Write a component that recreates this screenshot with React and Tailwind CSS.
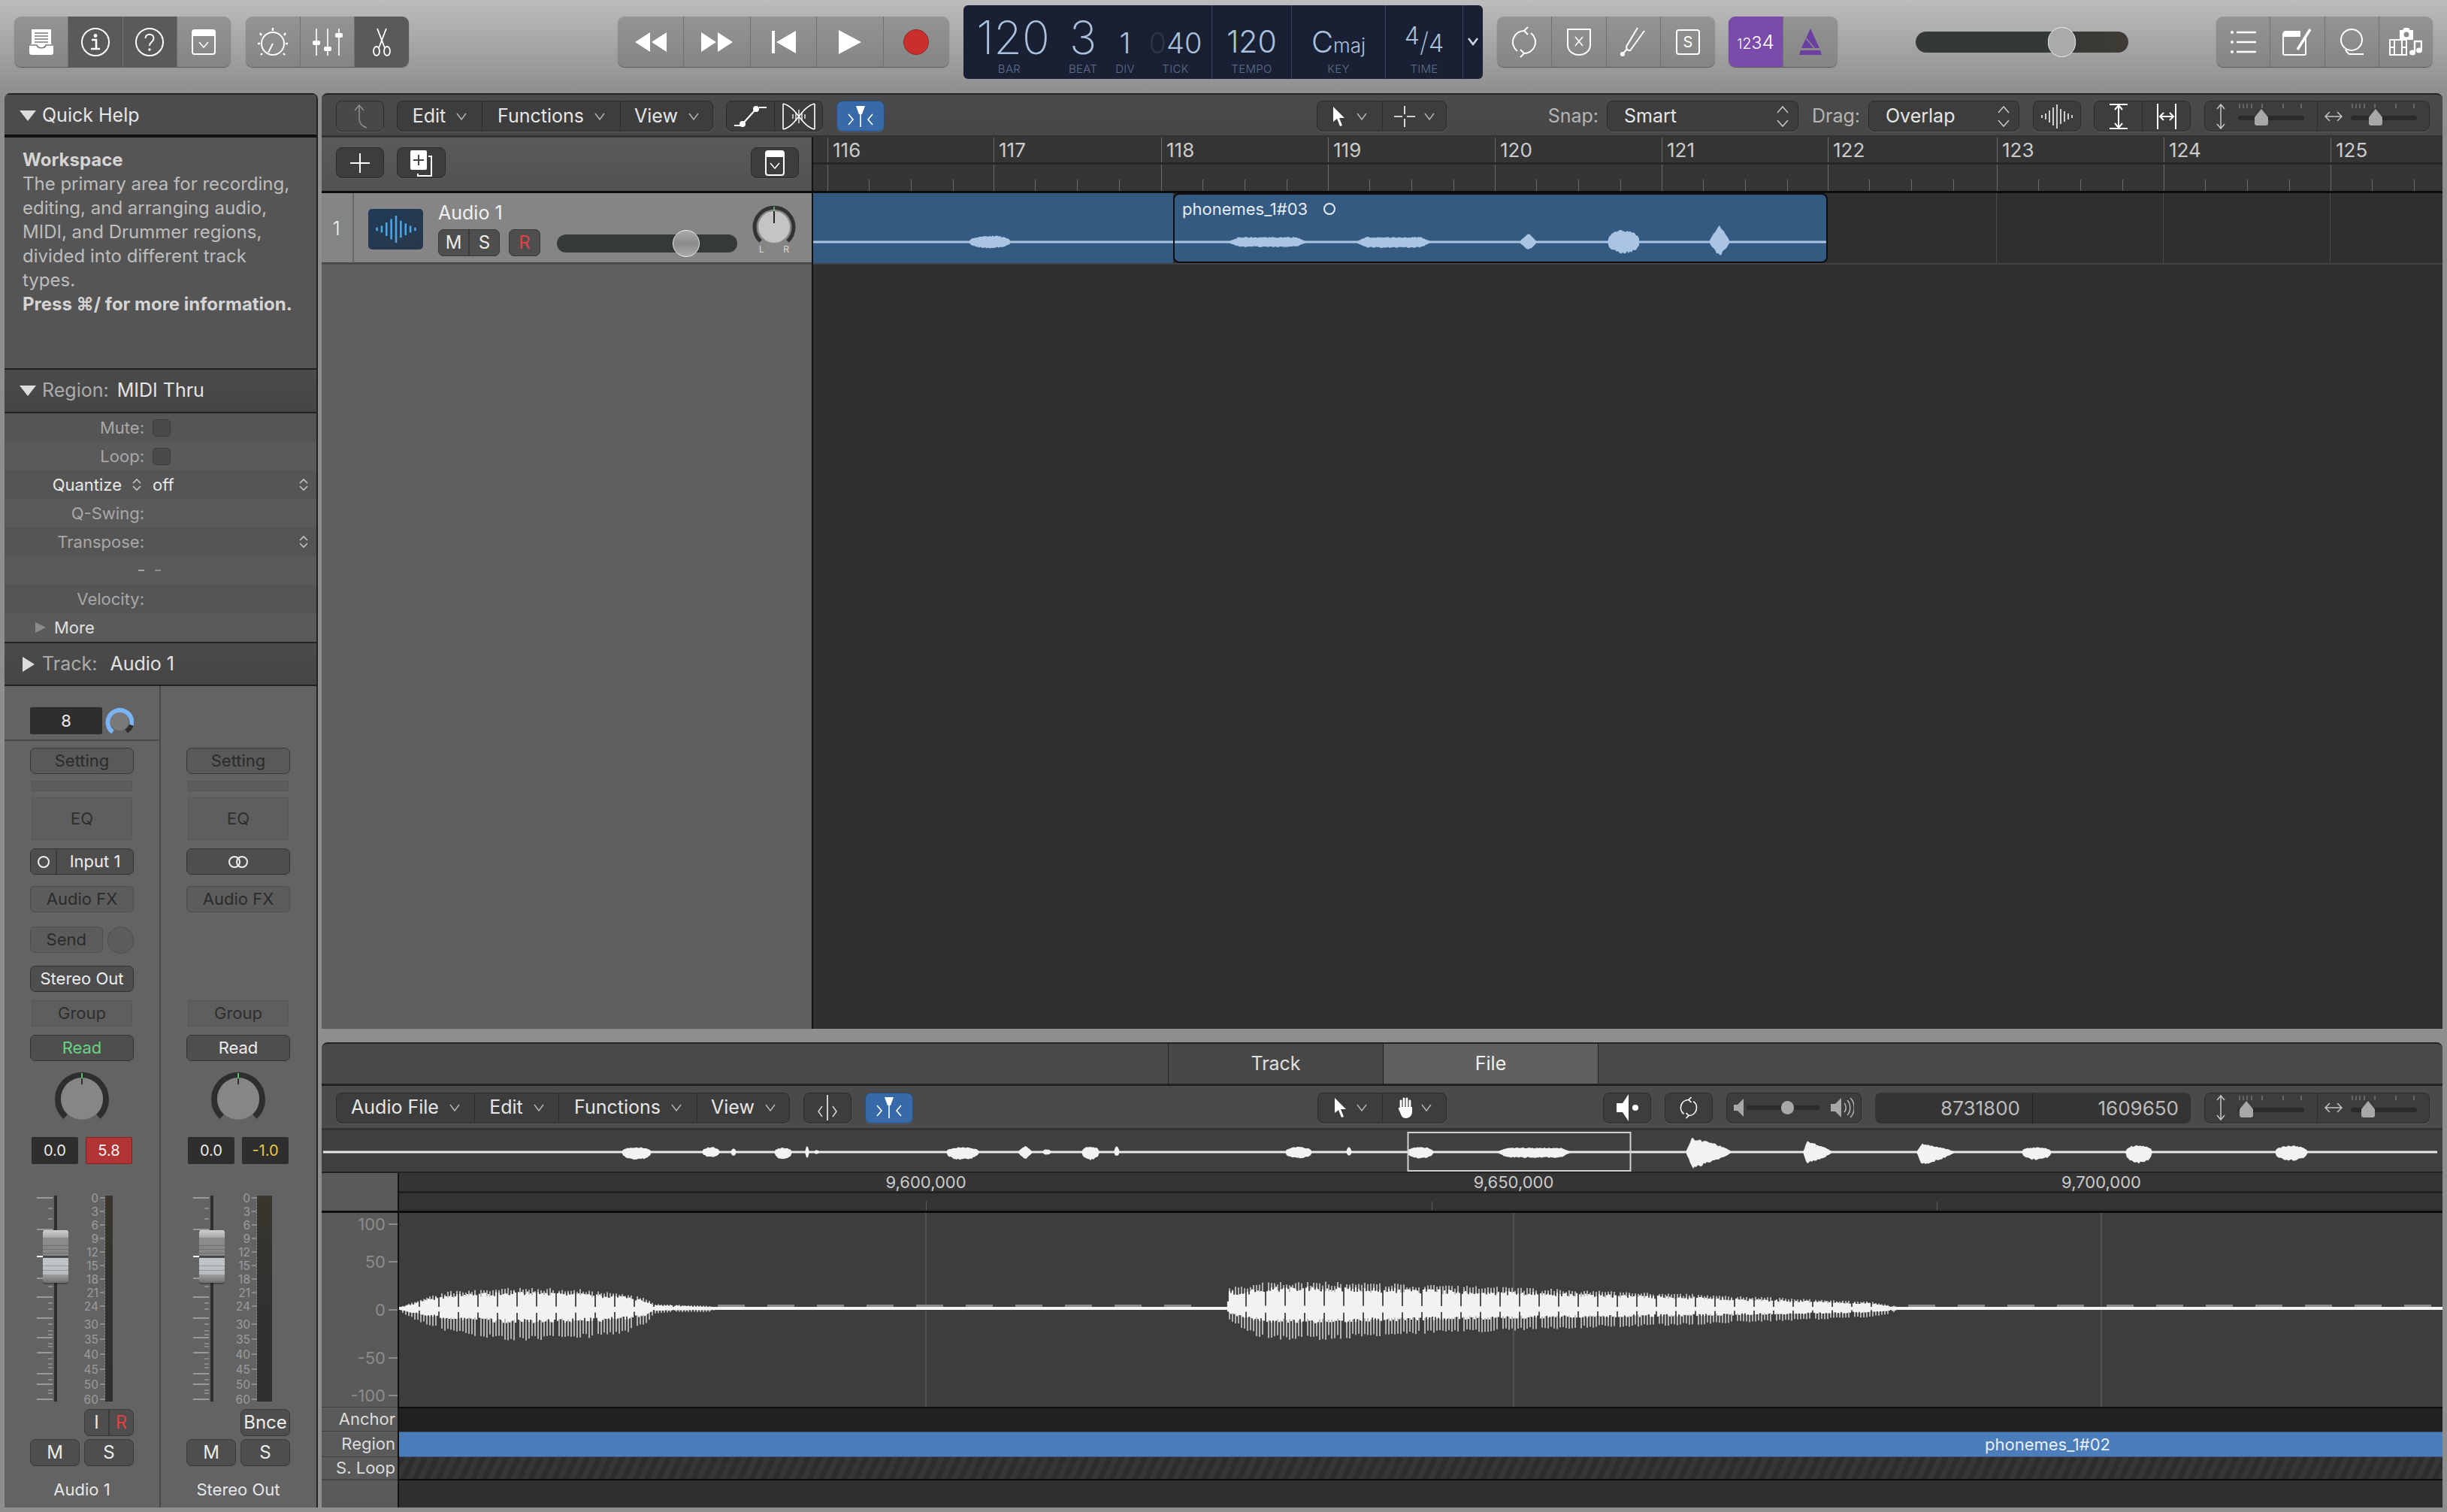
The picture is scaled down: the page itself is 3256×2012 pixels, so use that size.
import React from "react";

// deterministic noise so the waveforms stay the same on each render
const noise = (seed) => () => (seed = (seed * 16807) % 2147483647) / 2147483647;

const blob = (x0, x1, up, dn, cy, kind, seed) => {
  const r = noise(seed);
  const top = [];
  const bottom = [];
  for (let x = x0; x <= x1; x += 2) {
    const t = (x - x0) / (x1 - x0);
    let env = Math.pow(Math.sin(Math.PI * t), 0.42);
    if (kind === "flat") env = Math.min(1, Math.min(t, 1 - t) * 7);
    if (kind === "attack") env = t < 0.14 ? t / 0.14 : Math.pow(1 - (t - 0.14) / 0.86, 0.7);
    if (kind === "diamond") env = Math.pow(1 - Math.abs(2 * t - 1), 0.85);
    top.push(`${x} ${(cy - up * env * (0.78 + 0.22 * r())).toFixed(1)}`);
    bottom.unshift(`${x} ${(cy + dn * env * (0.78 + 0.22 * r())).toFixed(1)}`);
  }
  return "M" + top.concat(bottom).join("L") + "Z";
};

const lerp = (table, x) => {
  for (let i = 0; i < table.length - 1; i++) {
    const a = table[i];
    const b = table[i + 1];
    if (x >= a[0] && x <= b[0]) {
      const t = (x - a[0]) / (b[0] - a[0]);
      return [a[1] + (b[1] - a[1]) * t, a[2] + (b[2] - a[2]) * t];
    }
  }
  return [0, 0];
};

// pitch pulses: thin bars to the envelope over a solid core with narrow notches
const voice = (table, cy, seed) => {
  const r = noise(seed);
  let core = "";
  let bars = "";
  const from = table[0][0];
  const to = table[table.length - 1][0];
  let i = 0;
  for (let x = from; x <= to; x += 2) {
    const [u, l] = lerp(table, x);
    const notch = i % 13 === 0;
    const cu = notch ? 0.12 : 0.62 + 0.2 * r();
    const cl = notch ? 0.12 : 0.3 + 0.15 * r();
    core += `M${x} ${(cy - u * cu).toFixed(1)}V${(cy + l * cl).toFixed(1)}`;
    if (!notch && i % 2 === 0) {
      bars += `M${x} ${(cy - u * (0.84 + 0.16 * r())).toFixed(1)}V${(cy + l * (0.84 + 0.16 * r())).toFixed(1)}`;
    }
    i++;
  }
  return { core, bars };
};

const voiceA = [
  [1, 3, 3], [20, 10, 14], [40, 18, 22], [69, 24, 32], [109, 26, 38], [149, 29, 43], [189, 28, 42],
  [229, 28, 40], [269, 24, 38], [309, 20, 30], [329, 14, 20], [340, 7, 6], [369, 6, 4], [420, 4, 4],
];
const voiceB = [
  [1101, 3, 3], [1105, 30, 15], [1129, 30, 30], [1149, 37, 40], [1220, 37, 42], [1338, 34, 35],
  [1545, 27, 27], [1753, 19, 20], [1961, 10, 11], [1992, 4, 4],
];

const overviewBlobs = [
  [829, 869, 7, 11, "r"], [936, 960, 7, 7, "r"], [974, 982, 5, 5, "r"], [1032, 1056, 6, 10, "r"], [1073, 1079, 8, 9, "r"],
  [1085, 1092, 3, 3, "r"], [1261, 1305, 7, 11, "r"], [1356, 1376, 9, 11, "diamond"], [1389, 1401, 4, 4, "r"], [1441, 1465, 8, 11, "r"],
  [1484, 1492, 8, 6, "r"], [1712, 1748, 7, 9, "r"], [1793, 1801, 7, 5, "r"], [1874, 1910, 7, 9, "r"], [1993, 2093, 6, 8, "flat"],
  [2245, 2306, 21, 23, "attack"], [2401, 2440, 15, 17, "attack"], [2552, 2603, 12, 19, "attack"], [2692, 2732, 7, 11, "r"],
  [2830, 2866, 10, 16, "r"], [3029, 3073, 9, 12, "r"],
];
const overviewPath = overviewBlobs.map((b, i) => blob(b[0] - 430, b[1] - 430, b[2], b[3], 29, b[4], 97 + i * 31)).join("");

const arrangeA = blob(207, 263, 9, 9, 28, "r", 11);
const arrangeB = [
  [70, 177, 7, 7, "flat"], [240, 342, 7, 8, "flat"], [459, 482, 13, 13, "diamond"], [576, 619, 17, 16, "r"], [711, 739, 25, 21, "diamond"],
].map((b, i) => blob(b[0], b[1], b[2], b[3], 28, b[4], 53 + i * 17)).join("");

const mainA = voice(voiceA, 128, 71);
const mainB = voice(voiceB, 128, 733);

const I = ({ w, h, children, className = "" }) => (
  <svg width={w} height={h} viewBox={`0 0 ${w} ${h}`} fill="none" stroke="#fff" strokeWidth="2" className={className}>
    {children}
  </svg>
);

const LibraryIcon = () => (
  <I w={34} h={36}>
    <path d="M4 1h26v19l3 2v10a3 3 0 0 1-3 3H4a3 3 0 0 1-3-3V22l3-2z" fill="#fff" stroke="none" />
    <path d="M8 6h18M8 10h18M8 14h18M8 18h18M1 22h10c1 5 11 5 12 0h10" stroke="#7a7a7a" strokeWidth="1.6" />
  </I>
);
const InfoIcon = () => (
  <I w={40} h={40}>
    <circle cx="20" cy="20" r="18" />
    <circle cx="20" cy="11.5" r="2.4" fill="#fff" stroke="none" />
    <path d="M15 17h6v12M14 29h12" strokeWidth="2.6" />
  </I>
);
const HelpIcon = () => (
  <I w={40} h={40}>
    <circle cx="20" cy="20" r="18" />
    <path d="M14.5 15c0-7 11-7 11 0 0 5-5.500 4.500-5.500 10" />
    <circle cx="20" cy="30" r="1.700" fill="#fff" stroke="none" />
  </I>
);
const ListIcon = ({ w = 32, h = 34, sw = 2 }) => (
  <I w={w} h={h}>
    <rect x="1" y="1" width={w - 2} height={h - 2} rx="3" strokeWidth={sw} />
    <path d={`M1 4a3 3 0 0 1 3-3h${w - 8}a3 3 0 0 1 3 3v5H1z`} fill="#fff" stroke="none" />
    <path d={`M${w / 2 - 6} 17l6 7 6-7`} strokeWidth="1.500" />
  </I>
);
const SmartIcon = () => (
  <I w={42} h={40}>
    <circle cx="21" cy="22" r="15" />
    <path d="M21 22l-6 12" />
    <path d="M21 1v4M4 8l2 3M38 8l-2 3M1 22h3M38 22h3M5 37l2-2M37 37l-2-2" strokeWidth="2.400" />
  </I>
);
const MixerIcon = () => (
  <I w={42} h={38}>
    <path d="M6 1v36M21 1v36M36 1v36" strokeWidth="1.600" />
    <rect x="1" y="17" width="10" height="6" rx="2" fill="#fff" stroke="none" />
    <rect x="16" y="25" width="10" height="6" rx="2" fill="#fff" stroke="none" />
    <rect x="31" y="7" width="10" height="6" rx="2" fill="#fff" stroke="none" />
  </I>
);
const ScissorsIcon = () => (
  <I w={28} h={38}>
    <path d="M8 1l10 26M20 1L10 27" strokeWidth="1.800" />
    <ellipse cx="7" cy="31" rx="4" ry="6" strokeWidth="1.800" />
    <ellipse cx="21" cy="31" rx="4" ry="6" strokeWidth="1.800" />
  </I>
);
const Tri = ({ d, w, h }) => (
  <I w={w} h={h}>
    <path d={d} fill="#fff" stroke="none" />
  </I>
);
const CycleIcon = ({ w = 40, h = 42, sw = 2 }) => (
  <svg width={w} height={h} viewBox="0 0 40 42" fill="none" stroke="#fff" strokeWidth={sw}>
    <path d="M21 6A15 15 0 0 0 11 33M19 36A15 15 0 0 0 29 9" />
    <path d="M25 1l-5 5 5 5M15 31l5 5-5 5" />
  </svg>
);
const ShieldIcon = () => (
  <I w={32} h={36}>
    <path d="M1 1h30v21a15 13 0 0 1-30 0z" />
    <path d="M11 11l10 12M21 11L11 23" strokeWidth="1.600" />
  </I>
);
const ForkIcon = () => (
  <I w={36} h={40}>
    <path d="M9 26L24 1M15 30L33 5M9 26c0 6 6 6 6 4M10 29L5 35" />
    <circle cx="4" cy="36" r="3" fill="#fff" stroke="none" />
  </I>
);
const SoloIcon = () => (
  <I w={32} h={34}>
    <rect x="1" y="1" width="30" height="32" rx="3" />
    <text x="16" y="24" fontSize="20" fill="#fff" stroke="none" textAnchor="middle">S</text>
  </I>
);
const MetronomeIcon = () => (
  <I w={30} h={36}>
    <path d="M15 0L3 26h24z" fill="#6b3fa0" stroke="none" />
    <path d="M2 29h26l2 6H0z" fill="#6b3fa0" stroke="none" />
    <path d="M6 9l14 17" stroke="#8c8c8c" strokeWidth="1.500" />
  </I>
);
const ListBullets = () => (
  <I w={34} h={32}>
    <path d="M8 3h26M8 16h26M8 29h26" strokeWidth="2.400" />
    <circle cx="2" cy="3" r="2" fill="#fff" stroke="none" />
    <circle cx="2" cy="16" r="2" fill="#fff" stroke="none" />
    <circle cx="2" cy="29" r="2" fill="#fff" stroke="none" />
  </I>
);
const NotepadIcon = () => (
  <I w={40} h={36}>
    <path d="M1 6a3 3 0 0 1 3-3h20v8H1z" fill="#fff" stroke="none" />
    <path d="M1 6v27a2 2 0 0 0 2 2h26a2 2 0 0 0 2-2V12" />
    <path d="M20 28L37 1" strokeWidth="3.500" />
  </I>
);
const LoopIcon = () => (
  <I w={36} h={36}>
    <ellipse cx="18" cy="15" rx="14" ry="14" />
    <path d="M10 28c2 4 4 6 6 6h18" />
  </I>
);
const MediaIcon = () => (
  <I w={44} h={40}>
    <rect x="1" y="17" width="22" height="20" stroke="#fff" fill="#8c8c8c" strokeWidth="2" />
    <path d="M7 17v20M17 17v20M1 27h6M17 27h6" />
    <path d="M14 4h4l2-3h6l2 3h4v13H14z" fill="#fff" stroke="none" />
    <circle cx="23" cy="10" r="3.500" fill="#8c8c8c" stroke="none" />
    <path d="M34 33V19h9v11" strokeWidth="2.400" />
    <ellipse cx="31" cy="34" rx="4" ry="3.500" fill="#fff" stroke="none" />
    <ellipse cx="40" cy="31" rx="4" ry="3.500" fill="#fff" stroke="none" />
  </I>
);
const CatchIcon = () => (
  <I w={40} h={28}>
    <path d="M14 0h12l-4 11h-4z" fill="#fff" stroke="none" />
    <path d="M20 8v20M4 11l6 7-6 7M36 11l-6 7 6 7" strokeWidth="1.600" />
  </I>
);
const Chev = () => (
  <svg width="14" height="12" viewBox="0 0 14 12" fill="none" stroke="#b4b4b4" strokeWidth="1.500">
    <path d="M1 2l6 8 6-8" />
  </svg>
);
const UpDown = () => (
  <svg width="16" height="30" viewBox="0 0 16 30" fill="none" stroke="#c8c8c8" strokeWidth="1.500">
    <path d="M1 10l7-8 7 8M1 20l7 8 7-8" />
  </svg>
);
const Pointer = () => (
  <svg width="18" height="26" viewBox="0 0 18 26" fill="#fff">
    <path d="M1 0v20l5-4 4 10 3-1-4-10h7z" />
  </svg>
);
const Cross = () => (
  <I w={28} h={28}>
    <path d="M14 0v11M14 17v11M0 14h11M17 14h11" strokeWidth="1.600" />
  </I>
);
const Hand = () => (
  <svg width="22" height="28" viewBox="0 0 22 28" fill="#fff" stroke="#fff" strokeLinecap="round">
    <path d="M5 14V5M9 12V2M13 12V2M17 13V5" strokeWidth="2.800" />
    <path d="M4 14c-2 0-3 0-2 2l4 9c1 2 3 3 6 3s8-3 8-8v-7H4z" stroke="none" />
  </svg>
);
const WaveGlyph = ({ c = "#fff", w = 44, h = 32, sw = 1.500 }) => (
  <svg width={w} height={h} viewBox="0 0 44 32" preserveAspectRatio="none" fill="none" stroke={c} strokeWidth={sw}>
    <path d="M2 14v4M7 12v8M12 8v16M17 4v24M22 0v32M27 6v20M32 9v14M37 12v8M42 14v4" />
  </svg>
);

const TopBtn = ({ dark, purple, last, className = "", children }) => (
  <div
    className={`flex flex-1 items-center justify-center ${last ? "" : "border-r border-[#717171]"} ${
      purple ? "bg-[#7a4bab]" : dark ? "bg-[#5a5a5a]" : ""
    } ${className}`}
  >
    {children}
  </div>
);

const TopGroup = ({ className = "", children }) => (
  <div
    className={`flex h-[67px] overflow-hidden rounded-[9px] bg-gradient-to-b from-[#949494] to-[#858585] shadow-[0_1px_1px_#555] ${className}`}
  >
    {children}
  </div>
);

const Lcd = ({ className = "", value, label }) => (
  <div className={`flex h-full flex-col items-center ${className}`}>
    <div className="flex h-[72px] items-end leading-none text-[#a9c1dc]">{value}</div>
    <div className="mt-[5px] text-[15px] leading-none tracking-[0.02em] text-[#5d6f8c]">{label}</div>
  </div>
);

const TopBar = () => (
  <div className="flex h-[124px] shrink-0 items-center bg-gradient-to-b from-[#bcbcbc] to-[#8e8e8e] pb-[13px] pl-[19px]">
    <TopGroup className="w-[288px]">
      <TopBtn><LibraryIcon /></TopBtn>
      <TopBtn dark><InfoIcon /></TopBtn>
      <TopBtn dark><HelpIcon /></TopBtn>
      <TopBtn last><ListIcon /></TopBtn>
    </TopGroup>
    <TopGroup className="ml-[20px] w-[217px]">
      <TopBtn><SmartIcon /></TopBtn>
      <TopBtn><MixerIcon /></TopBtn>
      <TopBtn dark last><ScissorsIcon /></TopBtn>
    </TopGroup>
    <TopGroup className="ml-[278px] w-[441px]">
      <TopBtn><Tri w={42} h={26} d="M20 0v26L0 13zM42 0v26L22 13z" /></TopBtn>
      <TopBtn><Tri w={42} h={26} d="M0 0v26l20-13zM22 0v26l20-13z" /></TopBtn>
      <TopBtn><Tri w={32} h={30} d="M0 0h4v30H0zM32 0v30L6 15z" /></TopBtn>
      <TopBtn><Tri w={30} h={32} d="M0 0v32l30-16z" /></TopBtn>
      <TopBtn last><div className="h-[34px] w-[34px] rounded-full border border-[#8c2a27] bg-[#cb2f2b]" /></TopBtn>
    </TopGroup>
    <div className="ml-[19px] flex h-[98px] w-[691px] rounded-[6px] bg-[#1a2033] font-light">
      <Lcd className="w-[122px]" value={<span className="ml-[10px] translate-y-[2px] text-[61px] font-extralight">120</span>} label="BAR" />
      <Lcd className="w-[74px]" value={<span className="translate-y-[2px] text-[61px] font-extralight">3</span>} label="BEAT" />
      <Lcd className="w-[38px]" value={<span className="-translate-y-[3px] text-[38px] font-light">1</span>} label="DIV" />
      <Lcd
        className="w-[97px] border-r border-[#3a4660]"
        value={
          <span className="-translate-y-[3px] text-[38px] font-light">
            <span className="text-[#2c3448]">0</span>40
          </span>
        }
        label="TICK"
      />
      <Lcd className="w-[106px] border-r border-[#3a4660]" value={<span className="-translate-y-[3px] text-[41px] font-light">120</span>} label="TEMPO" />
      <Lcd
        className="w-[125px] border-r border-[#3a4660]"
        value={
          <span className="-translate-y-[3px] text-[40px] font-light">
            C<span className="text-[26px]">maj</span>
          </span>
        }
        label="KEY"
      />
      <Lcd
        className="w-[103px] border-r border-[#3a4660]"
        value={
          <span className="flex -translate-y-[3px] items-end pb-[2px] text-[32px] font-light">
            <span className="-translate-y-[10px]">4</span>
            <span className="text-[36px] font-extralight">/</span>
            <span>4</span>
          </span>
        }
        label="TIME"
      />
      <div className="flex flex-1 items-center justify-center pb-[2px]">
        <svg width="16" height="12" viewBox="0 0 16 12" fill="none" stroke="#cfd8e6" strokeWidth="2.500">
          <path d="M2 2l6 8 6-8" />
        </svg>
      </div>
    </div>
    <TopGroup className="ml-[19px] w-[290px]">
      <TopBtn><CycleIcon /></TopBtn>
      <TopBtn><ShieldIcon /></TopBtn>
      <TopBtn><ForkIcon /></TopBtn>
      <TopBtn last><SoloIcon /></TopBtn>
    </TopGroup>
    <TopGroup className="ml-[18px] w-[145px]">
      <TopBtn purple className="text-white">
        <span className="flex items-baseline font-light leading-none">
          <span className="text-[18px]">1</span>
          <span className="text-[20px]">2</span>
          <span className="text-[23px]">3</span>
          <span className="text-[26px]">4</span>
        </span>
      </TopBtn>
      <TopBtn last><MetronomeIcon /></TopBtn>
    </TopGroup>
    <div className="relative ml-[104px] h-[28px] w-[283px] rounded-full bg-gradient-to-r from-[#343936] from-[70%] to-[#3f3b34]">
      <div className="absolute left-[176px] top-[-6px] h-[40px] w-[37px] rounded-full border border-[#eee] bg-[#a9abaa]" />
    </div>
    <TopGroup className="ml-[117px] w-[288px]">
      <TopBtn><ListBullets /></TopBtn>
      <TopBtn><NotepadIcon /></TopBtn>
      <TopBtn><LoopIcon /></TopBtn>
      <TopBtn last><MediaIcon /></TopBtn>
    </TopGroup>
  </div>
);

const Row = ({ shade, children }) => (
  <div className={`flex h-[38px] items-center text-[22px] ${shade ? "bg-[#5a5a5a]" : "bg-[#555]"}`}>{children}</div>
);
const RowLabel = ({ children }) => (
  <div className="w-[186px] shrink-0 text-right text-[#a8a8a8]">{children}</div>
);
const Check = () => <div className="ml-[11px] h-[23px] w-[24px] rounded-[5px] border border-[#3a3a3a] bg-[#4a4a4a]" />;
const Stepper = ({ className = "" }) => (
  <svg width="12" height="18" viewBox="0 0 12 18" fill="none" stroke="#c4c4c4" strokeWidth="1.600" className={className}>
    <path d="M1 7l5-5 5 5M1 11l5 5 5-5" />
  </svg>
);
const Head = ({ h, open, label, value, gap }) => (
  <div className={`flex items-center border-y-2 border-[#222] bg-gradient-to-b from-[#4b4b4b] to-[#454545] text-[25px] ${h}`}>
    <svg width="22" height="20" viewBox="0 0 22 20" fill="#ddd" className="ml-[20px]">
      {open ? <path d="M0 3h22L11 17z" /> : <path d="M4 0l16 10L4 20z" />}
    </svg>
    <span className="ml-[8px] text-[#ababab]">{label}</span>
    <span className={`${gap} text-[#e4e4e4]`}>{value}</span>
  </div>
);

const StripBtn = ({ mt, children, kind, inset }) => (
  <div
    className={`flex h-[35px] items-center justify-center text-[22px] ${mt} ${
      inset ? "mx-[2px] border border-[#575757] bg-[#5e5e5e] text-[#2e2e2e]" : ""
    } ${kind === "dim" ? "rounded-[6px] border border-[#4e4e4e] bg-[#5c5c5c] text-[#2b2b2b]" : ""} ${
      kind === "on" ? "rounded-[7px] border border-[#333] bg-[#4e4e4e] text-[#ececec]" : ""
    } ${kind === "set" ? "rounded-[7px] border border-[#383838] bg-[#595959] text-[#2b2b2b]" : ""}`}
  >
    {children}
  </div>
);

const BigKnob = () => (
  <svg width="76" height="72" viewBox="0 0 76 72" fill="none" className="mx-auto mt-[14px]">
    <path d="M16 60A32 32 0 1 1 60 60" stroke="#2e2e2e" strokeWidth="8" />
    <circle cx="38" cy="36" r="28" fill="#868686" />
    <path d="M38 2v7" stroke="#58c26a" strokeWidth="2" />
    <path d="M38 9v8" stroke="#2e2e2e" strokeWidth="2" />
  </svg>
);

const scale = [
  ["0", 1593], ["3", 1611], ["6", 1629], ["9", 1647], ["12", 1665], ["15", 1683], ["18", 1701], ["21", 1719],
  ["24", 1737], ["30", 1761], ["35", 1781], ["40", 1801], ["45", 1821], ["50", 1841], ["60", 1861],
];
const major = [1593, 1635, 1700, 1725, 1753, 1779, 1799, 1827, 1841, 1861];
const minor = [1607, 1621, 1711, 1733, 1741, 1761, 1770, 1775, 1787, 1791, 1807, 1814, 1819, 1835, 1849, 1853];
const bands = [1656, 1661, 1666, 1683, 1689, 1695];

// fader and level meter, drawn on the strip's own coordinates
const Fader = ({ id, left, trackX, meterX, meterW, labelEnd }) => {
  const at = (y) => y - 1582;
  const dots = [];
  for (let y = 1592; y < 1864; y += 4) dots.push(y);
  return (
    <svg width="206" height="290" viewBox="0 0 206 290" className="mt-[34px]">
      <defs>
        <linearGradient id={`m${id}`} x1="0" y1="0" x2="0" y2="1">
          <stop offset="0" stopColor="#3a352d" />
          <stop offset="0.4" stopColor="#2f322e" />
          <stop offset="1" stopColor="#2d302d" />
        </linearGradient>
        <linearGradient id={`c${id}`} x1="0" y1="0" x2="0" y2="1">
          <stop offset="0" stopColor="#cfcfcf" />
          <stop offset="0.14" stopColor="#a8a8a8" />
          <stop offset="0.15" stopColor="#8d8d8d" />
          <stop offset="0.48" stopColor="#858585" />
          <stop offset="0.49" stopColor="#444" />
          <stop offset="0.52" stopColor="#444" />
          <stop offset="0.53" stopColor="#c2c6c8" />
          <stop offset="0.85" stopColor="#b8bcbe" />
          <stop offset="0.86" stopColor="#9a9a9a" />
          <stop offset="1" stopColor="#6e6e6e" />
        </linearGradient>
      </defs>
      {major.map((y) => (
        <rect key={y} x={left} y={at(y) - 1} width="21" height="2" fill="#9a9a9a" />
      ))}
      {minor.map((y) => (
        <rect key={y} x={left + 15} y={at(y) - 1} width="6" height="2" fill="#8a8a8a" />
      ))}
      <rect x={trackX} y={8} width="4" height="274" fill="#2e2e2e" />
      <rect x={left + 8} y={at(1636) + 2} width="34" height="70" rx="3" fill="#000" opacity="0.25" />
      <rect x={left + 8} y={at(1636)} width="34" height="70" rx="3" fill={`url(#c${id})`} />
      {bands.map((y) => (
        <rect key={y} x={left + 8} y={at(y)} width="34" height="1" fill={y < 1670 ? "#707070" : "#959a9c"} />
      ))}
      <rect x={left} y={at(1671) - 1} width="8" height="2" fill="#fff" />
      <rect x={meterX} y={8} width={meterW} height="274" fill={`url(#m${id})`} />
      {dots.map((y) => (
        <rect key={y} x={meterX - 1} y={at(y)} width="1" height="2" fill="#8f8f8f" />
      ))}
      {scale.map(([t, y]) => (
        <g key={t}>
          <rect x={meterX - 7} y={at(y) - 1} width="6" height="2" fill="#8c8c8c" />
          <text x={labelEnd} y={at(y) + 6} fontSize="15.500" fill="#9c9c9c" textAnchor="end">{t}</text>
        </g>
      ))}
    </svg>
  );
};

const ValueBox = ({ className = "", children }) => (
  <div className={`flex h-[36px] w-[62px] items-center justify-center rounded-[2px] text-[20px] ${className}`}>{children}</div>
);
const Mini = ({ className = "", children }) => (
  <div className={`flex h-[36px] items-center justify-center rounded-[7px] border border-[#3a3a3a] bg-[#4e4e4e] text-[24px] text-[#ececec] ${className}`}>
    {children}
  </div>
);

const Strip = ({ first }) => (
  <div className={`flex w-[208px] flex-col bg-[#636363] ${first ? "border-r-2 border-[#494949]" : ""}`}>
    <div className={`flex h-[73px] shrink-0 items-start pl-[34px] pt-[28px] ${first ? "border-b-2 border-[#494949]" : ""}`}>
      {first && (
        <>
          <div className="flex h-[36px] w-[96px] items-center justify-center rounded-[2px] bg-[#2e2e2e] text-[22px] text-[#e8e8e8]">8</div>
          <svg width="38" height="38" viewBox="0 0 38 38" fill="none" className="ml-[4px]">
            <path d="M10 33A16 16 0 1 1 35 24" stroke="#79b4f5" strokeWidth="6" />
            <path d="M35 24a16 16 0 0 1-7 8" stroke="#2e2e2e" strokeWidth="6" />
            <circle cx="19" cy="19" r="12" fill="#7a7a7a" />
          </svg>
        </>
      )}
    </div>
    <div className="ml-[34px] flex w-[138px] flex-col">
      <StripBtn mt="mt-[9px]" kind="set">Setting</StripBtn>
      <div className="mx-[2px] mt-[9px] h-[14px] border border-[#575757] bg-[#5c5c5c]" />
      <div className="mx-[2px] mt-[8px] flex h-[57px] items-center justify-center border border-[#575757] bg-[#5e5e5e] text-[22px] text-[#2e2e2e]">EQ</div>
      {first ? (
        <div className="mt-[11px] flex h-[35px] rounded-[7px] border border-[#333] bg-[#4e4e4e] text-[22px] text-[#ececec]">
          <div className="flex w-[35px] items-center justify-center border-r-2 border-[#3d3d3d]">
            <div className="h-[16px] w-[16px] rounded-full border-2 border-[#eee]" />
          </div>
          <div className="flex flex-1 items-center justify-center">Input 1</div>
        </div>
      ) : (
        <div className="mt-[11px] flex h-[35px] items-center justify-center rounded-[7px] border border-[#333] bg-[#4e4e4e]">
          <svg width="26" height="16" viewBox="0 0 26 16" fill="none" stroke="#eee" strokeWidth="2">
            <circle cx="8" cy="8" r="7" />
            <circle cx="18" cy="8" r="7" />
          </svg>
        </div>
      )}
      <StripBtn mt="mt-[15px]" kind="dim">Audio FX</StripBtn>
      {first ? (
        <>
          <div className="mt-[19px] flex h-[35px] items-center">
            <div className="flex h-full w-[98px] items-center justify-center rounded-[6px] border border-[#4e4e4e] bg-[#5c5c5c] text-[22px] text-[#2b2b2b]">Send</div>
            <div className="ml-[6px] h-[36px] w-[36px] rounded-full border border-[#4e4e4e] bg-[#5c5c5c]" />
          </div>
          <StripBtn mt="mt-[17px]" kind="on">Stereo Out</StripBtn>
        </>
      ) : (
        <div className="mt-[19px] h-[87px]" />
      )}
      <StripBtn mt="mt-[11px]" inset>Group</StripBtn>
      <div className="mt-[11px]" />
      <StripBtn mt="" kind="on">
        <span className={first ? "text-[#64d482]" : ""}>Read</span>
      </StripBtn>
      <BigKnob />
      <div className="mx-[2px] mt-[15px] flex justify-between">
        <ValueBox className="bg-[#2e2e2e] text-[#eaeaea]">0.0</ValueBox>
        {first ? (
          <ValueBox className="border border-[#7c2626] bg-[#b03434] text-[#f4f4f4]">5.8</ValueBox>
        ) : (
          <ValueBox className="bg-[#2e2e2e] text-[#e9c74a]">-1.0</ValueBox>
        )}
      </div>
    </div>
    <Fader
      id={first ? "a" : "b"}
      left={43}
      trackX={66}
      meterX={first ? 134 : 128}
      meterW={first ? 10 : 20}
      labelEnd={first ? 125 : 119}
    />
    <div className="ml-[34px] flex w-[138px] flex-col">
      <div className="mt-[2px] flex justify-end">
        {first ? (
          <Mini className="w-[66px]">
            <span className="flex-1 border-r-2 border-[#3a3a3a] text-center">I</span>
            <span className="flex-1 text-center text-[#e04141]">R</span>
          </Mini>
        ) : (
          <Mini className="w-[66px] text-[22px]">Bnce</Mini>
        )}
      </div>
      <div className="mt-[4px] flex justify-between">
        <Mini className="w-[66px]">M</Mini>
        <Mini className="w-[66px]">S</Mini>
      </div>
      <div className="mt-[17px] flex h-[28px] items-center justify-center whitespace-nowrap text-[22px] text-[#e6e6e6]">
        {first ? "Audio 1" : "Stereo Out"}
      </div>
    </div>
  </div>
);

const LeftPanel = () => (
  <div className="flex w-[417px] shrink-0 flex-col overflow-hidden rounded-t-[8px] border-r-2 border-[#222] bg-[#555]">
    <div className="flex h-[59px] shrink-0 items-center border-y-2 border-b-4 border-y-[#222] border-b-[#111] bg-[#4c4c4c] pt-[2px] text-[25px] text-[#e6e6e6]">
      <svg width="22" height="20" viewBox="0 0 22 20" fill="#ddd" className="ml-[20px]">
        <path d="M0 3h22L11 17z" />
      </svg>
      <span className="ml-[8px]">Quick Help</span>
    </div>
    <div className="h-[307px] shrink-0 pl-[24px] pt-[14px] text-[24px] leading-[32px] text-[#bdbdbd]">
      <div className="font-bold text-[#d4d4d4]">Workspace</div>
      <div className="w-[358px]">The primary area for recording, editing, and arranging audio, MIDI, and Drummer regions, divided into different track types.</div>
      <div className="whitespace-nowrap font-bold text-[#d4d4d4]">Press ⌘/ for more information.</div>
    </div>
    <Head h="h-[60px] shrink-0" open label="Region:" value="MIDI Thru" gap="ml-[11px]" />
    <Row><RowLabel>Mute:</RowLabel><Check /></Row>
    <Row shade><RowLabel>Loop:</RowLabel><Check /></Row>
    <Row>
      <div className="flex w-[186px] shrink-0 items-center justify-end gap-[14px] pr-[4px] text-[#e8e8e8]">
        Quantize <Stepper />
      </div>
      <span className="ml-[11px] text-[#e8e8e8]">off</span>
      <Stepper className="ml-auto mr-[11px]" />
    </Row>
    <Row shade><RowLabel>Q-Swing:</RowLabel></Row>
    <Row><RowLabel>Transpose:</RowLabel><Stepper className="ml-auto mr-[11px]" /></Row>
    <Row shade>
      <div className="ml-[178px] flex gap-[14px]">
        <div className="h-[2px] w-[8px] bg-[#a8a8a8]" />
        <div className="h-[2px] w-[8px] bg-[#8e8e8e]" />
      </div>
    </Row>
    <Row><RowLabel>Velocity:</RowLabel></Row>
    <Row shade>
      <svg width="16" height="14" viewBox="0 0 16 14" fill="#8c8c8c" className="ml-[40px]">
        <path d="M1 0l14 7L1 14z" />
      </svg>
      <span className="ml-[10px] text-[#e0e0e0]">More</span>
    </Row>
    <Head h="h-[59px] shrink-0" label="Track:" value="Audio 1" gap="ml-[17px]" />
    <div className="flex flex-1">
      <Strip first />
      <Strip />
    </div>
  </div>
);

const ToolSeg = ({ className = "", center, children }) => (
  <div className={`flex h-[41px] shrink-0 rounded-[8px] border border-[#2b2b2b] bg-[#3d3d3d] shadow-[0_1px_0_#5f5f5f] ${center ? "items-center" : "items-stretch"} ${className}`}>
    {children}
  </div>
);
const Cell = ({ className = "", last, children }) => (
  <div className={`flex items-center justify-center ${last ? "" : "border-r border-[#2b2b2b]"} ${className}`}>{children}</div>
);
const MenuCell = ({ className, label, last }) => (
  <Cell className={`gap-[14px] text-[25px] text-[#e6e6e6] ${className}`} last={last}>
    {label} <Chev />
  </Cell>
);

const UpDownArrow = () => (
  <I w={14} h={36}>
    <path d="M7 2v32M2 8l5-6 5 6M2 28l5 6 5-6" stroke="#c4c4c4" strokeWidth="1.500" />
  </I>
);
const LeftRightArrow = () => (
  <I w={26} h={16}>
    <path d="M2 8h22M8 2L2 8l6 6M18 2l6 6-6 6" stroke="#c4c4c4" strokeWidth="1.500" />
  </I>
);
const ZoomTrack = ({ className, thumb }) => (
  <div className={`relative h-full ${className}`}>
    <div className="absolute left-0 right-0 top-[19px] h-[6px] rounded-full bg-[#2a2a2a]" />
    <svg width="18" height="22" viewBox="0 0 18 22" fill="#a8a8a8" className={`absolute top-[10px] ${thumb}`}>
      <path d="M9 0l9 11v8a3 3 0 0 1-3 3H3a3 3 0 0 1-3-3v-8z" />
    </svg>
    <svg width="88" height="8" viewBox="0 0 88 8" className="absolute left-0 top-[3px]" stroke="#8e8e8e">
      <path d="M2 0v6M7 0v6M12 0v6M18 0v6M32 0v6M60 0v6M84 0v6" />
    </svg>
  </div>
);
const ZoomGroup = ({ thumbA, thumbB }) => (
  <ToolSeg className="ml-[18px] w-[300px]">
    <Cell className="w-[150px] justify-start pl-[14px]">
      <UpDownArrow />
      <ZoomTrack className="ml-[16px] w-[88px]" thumb={thumbA} />
    </Cell>
    <Cell className="flex-1 justify-start pl-[8px]" last>
      <LeftRightArrow />
      <ZoomTrack className="ml-[10px] w-[88px]" thumb={thumbB} />
    </Cell>
  </ToolSeg>
);

const barWidths = ["w-[221px]", "w-[223px]", "w-[222px]", "w-[222px]", "w-[222px]", "w-[221px]", "w-[225px]", "w-[222px]", "w-[222px]", "w-[130px]"];
const barNames = [116, 117, 118, 119, 120, 121, 122, 123, 124, 125];

const Arrange = () => (
  <div className="flex h-[1245px] flex-col overflow-hidden rounded-t-[8px] border-t-2 border-[#222] bg-[#2f2f2f]">
    <div className="flex h-[57px] shrink-0 items-center border-b-[3px] border-[#333] bg-gradient-to-b from-[#4a4a4a] to-[#474747] pl-[19px] pt-[3px] text-[25px]">
      <ToolSeg className="w-[64px] justify-center bg-[#484848]">
        <Cell last>
          <svg width="26" height="36" viewBox="0 0 26 36" fill="none" stroke="#8f8f8f" strokeWidth="1.500">
            <path d="M6 10l6-7 6 7M12 3v18c0 6 4 10 10 12" />
          </svg>
        </Cell>
      </ToolSeg>
      <ToolSeg className="ml-[17px] w-[421px]">
        <MenuCell className="w-[113px]" label="Edit" />
        <MenuCell className="w-[184px]" label="Functions" />
        <MenuCell className="flex-1" label="View" last />
      </ToolSeg>
      <ToolSeg className="ml-[17px] w-[129px]">
        <Cell className="w-[64px]">
          <I w={46} h={36}>
            <path d="M12 28l18-20M34 6h10M1 30h8" />
            <circle cx="30" cy="8" r="4" fill="#fff" stroke="none" />
            <circle cx="12" cy="28" r="4" fill="#fff" stroke="none" />
          </I>
        </Cell>
        <Cell className="flex-1" last>
          <I w={44} h={36}>
            <path d="M1 1c18 4 24 30 42 34M43 1C25 5 19 31 1 35M1 1v34M43 1v34" strokeWidth="1.600" />
            <path d="M14 15v6M18 12v12M22 9v18M26 12v12M30 15v6" strokeWidth="1.300" />
          </I>
        </Cell>
      </ToolSeg>
      <ToolSeg className="ml-[18px] w-[64px] justify-center border-[#274d7c] bg-[#376aa8]">
        <Cell last><CatchIcon /></Cell>
      </ToolSeg>
      <ToolSeg className="ml-[575px] w-[173px]">
        <Cell className="w-[87px] gap-[14px]"><Pointer /><Chev /></Cell>
        <Cell className="flex-1 gap-[12px]" last><Cross /><Chev /></Cell>
      </ToolSeg>
      <div className="w-[213px] pr-[11px] text-right text-[#b4b4b4]">Snap:</div>
      <ToolSeg center className="w-[255px] justify-between pl-[22px] pr-[12px] text-[#e6e6e6]">
        Smart <UpDown />
      </ToolSeg>
      <div className="w-[93px] pr-[11px] text-right text-[#b4b4b4]">Drag:</div>
      <ToolSeg center className="w-[201px] justify-between pl-[22px] pr-[12px] text-[#e6e6e6]">
        Overlap <UpDown />
      </ToolSeg>
      <ToolSeg className="ml-[18px] w-[64px] justify-center">
        <Cell last><WaveGlyph /></Cell>
      </ToolSeg>
      <ToolSeg className="ml-[17px] w-[129px]">
        <Cell className="w-[64px]">
          <I w={28} h={36}>
            <path d="M2 2h24M2 34h24M14 3v30M9 9l5-6 5 6M9 27l5 6 5-6" />
          </I>
        </Cell>
        <Cell className="flex-1" last>
          <I w={28} h={36}>
            <path d="M2 1v34M26 1v34M5 18h18M10 13l-5 5 5 5M18 13l5 5-5 5" />
          </I>
        </Cell>
      </ToolSeg>
      <ZoomGroup thumbA="left-[22px]" thumbB="left-[24px]" />
    </div>
    <div className="flex flex-1">
      <div className="flex w-[654px] shrink-0 flex-col border-r-2 border-[#111] bg-[#5f5f5f]">
        <div className="flex h-[74px] shrink-0 items-center border-b-[3px] border-[#0c0c0c] bg-gradient-to-b from-[#5a5a5a] to-[#525252] px-[19px] pb-[4px]">
          <ToolSeg className="w-[64px] justify-center">
            <Cell last>
              <I w={26} h={26}><path d="M13 0v26M0 13h26" /></I>
            </Cell>
          </ToolSeg>
          <ToolSeg className="ml-[17px] w-[65px] justify-center">
            <Cell last>
              <I w={34} h={36}>
                <path d="M12 32v3h18V9h-4" />
                <rect x="2" y="1" width="22" height="26" rx="2" fill="#fff" stroke="none" />
                <path d="M13 7v14M6 14h14" stroke="#444" />
              </I>
            </Cell>
          </ToolSeg>
          <ToolSeg className="ml-auto mr-[-2px] w-[64px] justify-center">
            <Cell last><ListIcon w={26} h={34} /></Cell>
          </ToolSeg>
        </div>
        <div className="flex h-[95px] shrink-0 border-b-[3px] border-[#4c4c4c] bg-[#858585]">
          <div className="flex w-[43px] shrink-0 items-center justify-center border-r-2 border-[#6a6a6a] pr-[2px] text-[26px] font-light text-[#f0f0f0]">1</div>
          <div className="ml-[19px] mt-[21px] flex h-[54px] w-[73px] items-center justify-center rounded-[5px] bg-gradient-to-br from-[#1f3a58] to-[#29384a]">
            <WaveGlyph c="#4ba6e6" w={56} h={36} sw={2} />
          </div>
          <div className="ml-[20px] flex w-[136px] flex-col pt-[11px]">
            <div className="text-[25px] leading-[30px] text-[#f0f0f0]">Audio 1</div>
            <div className="mt-[7px] flex">
              <div className="flex h-[36px] w-[82px] rounded-[7px] border border-[#3a3a3a] bg-[#4e4e4e] text-[24px] text-[#ececec]">
                <span className="flex flex-1 items-center justify-center border-r-2 border-[#3a3a3a]">M</span>
                <span className="flex flex-1 items-center justify-center">S</span>
              </div>
              <div className="ml-[12px] flex h-[36px] w-[42px] items-center justify-center rounded-[7px] border border-[#3a3a3a] bg-[#4e4e4e] text-[24px] text-[#e04141]">R</div>
            </div>
          </div>
          <div className="relative ml-[22px] mt-[55px] h-[24px] w-[240px] rounded-full bg-[#363a37]">
            <div className="absolute left-[154px] top-[-6px] h-[36px] w-[36px] rounded-full border border-[#eee] bg-gradient-to-b from-[#aaa] via-[#8a8d8b] to-[#aaa]" />
          </div>
          <div className="ml-[19px] mt-[15px] flex w-[60px] flex-col items-center">
            <svg width="60" height="56" viewBox="0 0 60 56" fill="none">
              <path d="M12 49A26 26 0 1 1 48 49" stroke="#333" strokeWidth="5" />
              <circle cx="30" cy="30" r="21" fill="#c4c4c4" />
              <path d="M30 3v6" stroke="#5fd06e" strokeWidth="1.500" />
              <path d="M30 9v16" stroke="#222" strokeWidth="2" />
            </svg>
            <div className="-mt-[2px] flex w-[40px] justify-between text-[12px] leading-none text-[#d8d8d8]">
              <span>L</span>
              <span>R</span>
            </div>
          </div>
        </div>
      </div>
      <div className="flex min-w-0 flex-1 flex-col">
        <div className="flex h-[36px] shrink-0 border-b-[3px] border-[#262626] bg-[#353535] pl-[19px] text-[26px] leading-[33px] text-[#cbcbcb]">
          {barNames.map((n, i) => (
            <div key={n} className={`shrink-0 border-l border-[#6a6a6a] pl-[6px] ${barWidths[i]}`}>{n}</div>
          ))}
        </div>
        <div className="flex h-[38px] shrink-0 border-b-[3px] border-[#0c0c0c] bg-[#353535] pl-[19px]">
          {barNames.map((n, i) => (
            <div key={n} className={`flex shrink-0 items-end border-l border-[#6a6a6a] pl-[54px] ${barWidths[i]} ${i === 9 ? "overflow-hidden" : ""}`}>
              <div className="h-[15px] w-[56px] shrink-0 border-l border-[#6a6a6a]" />
              <div className="h-[15px] w-[56px] shrink-0 border-l border-[#6a6a6a]" />
              <div className="h-[15px] w-[56px] shrink-0 border-l border-[#6a6a6a]" />
            </div>
          ))}
        </div>
        <div className="flex h-[95px] shrink-0 border-b-2 border-[#434343]">
          <div className="flex w-[479px] shrink-0 flex-col bg-[#355a82]">
            <svg width="479" height="56" viewBox="0 0 479 56" fill="#a9c5e3" className="mt-auto">
              <rect x="0" y="26.500" width="479" height="3" />
              <path d={arrangeA} />
            </svg>
          </div>
          <div className="relative flex w-[871px] shrink-0 flex-col rounded-[8px] border-x-2 border-y-2 border-[#0d0d0d] bg-[#355a82]">
            <div className="flex items-center pl-[10px] pt-[5px] text-[22px] leading-[28px] text-[#e4ecf5]">
              phonemes_1#03
              <div className="ml-[21px] h-[16px] w-[16px] rounded-full border-2 border-[#e4ecf5]" />
            </div>
            <svg width="867" height="56" viewBox="0 0 867 56" fill="#a9c5e3" className="-mb-[2px] mt-auto">
              <rect x="0" y="26.500" width="867" height="3" />
              <path d={arrangeB} />
            </svg>
          </div>
          <div className="w-[225px] shrink-0 border-r border-[#4a4a4a]" />
          <div className="w-[222px] shrink-0 border-r border-[#4a4a4a]" />
          <div className="w-[222px] shrink-0 border-r border-[#4a4a4a]" />
        </div>
      </div>
    </div>
  </div>
);

const Vol = () => (
  <ToolSeg center className="ml-[18px] w-[180px] px-[9px]">
    <svg width="14" height="24" viewBox="0 0 14 24" fill="#a8a8a8"><path d="M0 8h5l8-8v24l-8-8H0z" /></svg>
    <div className="relative ml-[3px] h-[6px] w-[97px] rounded-[3px] bg-[#2c2c2c]">
      <div className="absolute left-[46px] top-[-6px] h-[18px] w-[17px] rounded-full bg-[#a8a8a8]" />
    </div>
    <svg width="32" height="30" viewBox="0 0 32 30" fill="none" stroke="#b4b4b4" strokeWidth="1.600" className="ml-auto">
      <path d="M1 10h6l8-8v26l-8-8H1z" fill="#a8a8a8" stroke="none" />
      <path d="M19 9c3 3 3 9 0 12M23 5c5 5 5 15 0 20M27 2c7 7 7 19 0 26" />
    </svg>
  </ToolSeg>
);

const Editor = () => (
  <div className="flex flex-1 flex-col overflow-hidden rounded-t-[8px] border-t-2 border-[#222] bg-[#303030]">
    <div className="flex h-[56px] shrink-0 border-b-[3px] border-[#222] bg-[#4a4a4a] pl-[1126px] text-[25px]">
      <div className="flex w-[287px] items-center justify-center border-x border-[#222] bg-[#484848] text-[#e0e0e0]">Track</div>
      <div className="flex w-[286px] items-center justify-center border-r border-[#222] bg-[#606060] text-[#f0f0f0]">File</div>
    </div>
    <div className="flex h-[59px] shrink-0 items-center border-b-[3px] border-[#333] bg-[#4a4a4a] pl-[19px] pt-[2px] text-[22px]">
      <ToolSeg className="w-[604px]">
        <MenuCell className="w-[184px]" label="Audio File" />
        <MenuCell className="w-[112px]" label="Edit" />
        <MenuCell className="w-[184px]" label="Functions" />
        <MenuCell className="flex-1" label="View" last />
      </ToolSeg>
      <ToolSeg className="ml-[18px] w-[64px] justify-center">
        <Cell last>
          <I w={28} h={36}>
            <path d="M14 1v34" strokeWidth="1.500" />
            <path d="M7 16l-5 7 5 7M21 16l5 7-5 7" strokeWidth="1.500" stroke="#d8d8d8" />
          </I>
        </Cell>
      </ToolSeg>
      <ToolSeg className="ml-[18px] w-[64px] justify-center border-[#274d7c] bg-[#376aa8]">
        <Cell last><CatchIcon /></Cell>
      </ToolSeg>
      <ToolSeg className="ml-[538px] w-[172px]">
        <Cell className="w-[86px] gap-[12px]"><Pointer /><Chev /></Cell>
        <Cell className="flex-1 gap-[10px]" last><Hand /><Chev /></Cell>
      </ToolSeg>
      <ToolSeg className="ml-[208px] w-[64px] justify-center">
        <Cell last>
          <svg width="30" height="36" viewBox="0 0 30 36" fill="#fff">
            <path d="M1 12h8l8-12v36L9 24H1z" />
            <circle cx="26" cy="18" r="4" />
          </svg>
        </Cell>
      </ToolSeg>
      <ToolSeg className="ml-[18px] w-[64px] justify-center">
        <Cell last><CycleIcon w={28} h={36} sw={2.400} /></Cell>
      </ToolSeg>
      <Vol />
      <div className="ml-[18px] flex h-[41px] w-[420px] shrink-0 rounded-[8px] bg-[#343434] text-[26px] text-[#bcbcbc]">
        <div className="flex w-[210px] items-center justify-end border-r border-[#222] pr-[16px]">8731800</div>
        <div className="flex flex-1 items-center justify-end pr-[16px]">1609650</div>
      </div>
      <ZoomGroup thumbA="left-[2px]" thumbB="left-[14px]" />
    </div>
    <div className="h-[57px] shrink-0 border-b-2 border-[#222] bg-[#404040]">
      <svg width="2822" height="55" viewBox="0 0 2822 55" className="block">
        <rect x="2" y="27.500" width="2813" height="3" fill="#e8e8e8" />
        <path d={overviewPath} fill="#f2f2f2" />
        <rect x="1445.500" y="3" width="296" height="51" fill="none" stroke="#cfcfcf" strokeWidth="2" />
      </svg>
    </div>
    <div className="flex flex-1">
      <div className="flex w-[103px] shrink-0 flex-col border-r-2 border-[#111] bg-[#5a5a5a] text-[22px] text-[#dcdcdc]">
        <div className="h-[53px] shrink-0 border-b-[3px] border-[#0c0c0c]" />
        <svg width="101" height="258" viewBox="0 0 101 258" fontSize="22" fill="#8c8c8c" textAnchor="end" className="shrink-0">
          {[["100", 15], ["50", 65], ["0", 129], ["-50", 193], ["-100", 243]].map(([t, y]) => (
            <g key={t}>
              <text x="85" y={y + 8}>{t}</text>
              <rect x="89" y={y - 1} width="12" height="2" fill="#8c8c8c" />
            </g>
          ))}
        </svg>
        <div className="flex h-[33px] shrink-0 items-center justify-end border-y border-[#444] pr-[3px]">Anchor</div>
        <div className="flex h-[34px] shrink-0 items-center justify-end border-b border-[#444] pr-[3px]">Region</div>
        <div className="flex h-[31px] shrink-0 items-center justify-end border-b-2 border-[#444] pr-[3px]">S. Loop</div>
      </div>
      <div className="flex min-w-0 flex-1 flex-col">
        <div className="flex h-[27px] shrink-0 border-b-[3px] border-[#222] bg-[#353535] pl-[310px] text-[22px] leading-[24px] text-[#cbcbcb]">
          <div className="w-[782px] text-center">9,600,000</div>
          <div className="w-[782px] text-center">9,650,000</div>
          <div className="w-[782px] text-center">9,700,000</div>
        </div>
        <div className="flex h-[26px] shrink-0 items-end border-b-[3px] border-[#0c0c0c] bg-[#333] pl-[701px]">
          <div className="h-[12px] w-[782px] border-l border-[#5c5c5c]" />
          <div className="h-[12px] w-[782px] border-l border-[#5c5c5c]" />
          <div className="h-[12px] w-[782px] border-l border-[#5c5c5c]" />
        </div>
        <div className="h-[258px] shrink-0 bg-[#3d3d3d]">
          <svg width="2719" height="258" viewBox="0 0 2719 258" className="block">
            <path d="M701 0v258M1483 0v258M2265 0v258" stroke="#595959" strokeWidth="1.500" />
            {Array.from({ length: 36 }, (_, i) => (
              <rect key={i} x={424 + i * 66} y="122" width="36" height="6" fill="#8a8a8a" opacity={i > 9 && i < 24 ? 0 : 1} />
            ))}
            <rect x="0" y="125" width="2719" height="4" fill="#f4f4f4" />
            <path d={mainA.core + mainB.core} stroke="#f2f2f2" strokeWidth="2.200" fill="none" />
            <path d={mainA.bars + mainB.bars} stroke="#f2f2f2" strokeWidth="1.300" fill="none" />
          </svg>
        </div>
        <div className="h-[2px] shrink-0 bg-[#0c0c0c]" />
        <div className="h-[31px] shrink-0 bg-[#212121]" />
        <div className="flex h-[34px] shrink-0 items-center border-y border-[#3c5878] bg-[#4a7dba] pl-[2110px] text-[22px] text-[#e8eef6]">phonemes_1#02</div>
        <div className="h-[29px] shrink-0 bg-[repeating-linear-gradient(115deg,#2d2d2d_0px,#2d2d2d_7px,#363636_7px,#363636_14px)]" />
        <div className="h-[2px] shrink-0 bg-[#0c0c0c]" />
      </div>
    </div>
  </div>
);

export default function App() {
  return (
    <div className="flex h-[2012px] w-[3256px] flex-col overflow-hidden bg-[#8e8e8e] font-['Inter','Liberation_Sans',sans-serif] antialiased">
      <TopBar />
      <div className="flex min-h-0 flex-1 gap-[5px] px-[6px] pb-[6px]">
        <LeftPanel />
        <div className="flex min-w-0 flex-1 flex-col gap-[18px]">
          <Arrange />
          <Editor />
        </div>
      </div>
    </div>
  );
}
